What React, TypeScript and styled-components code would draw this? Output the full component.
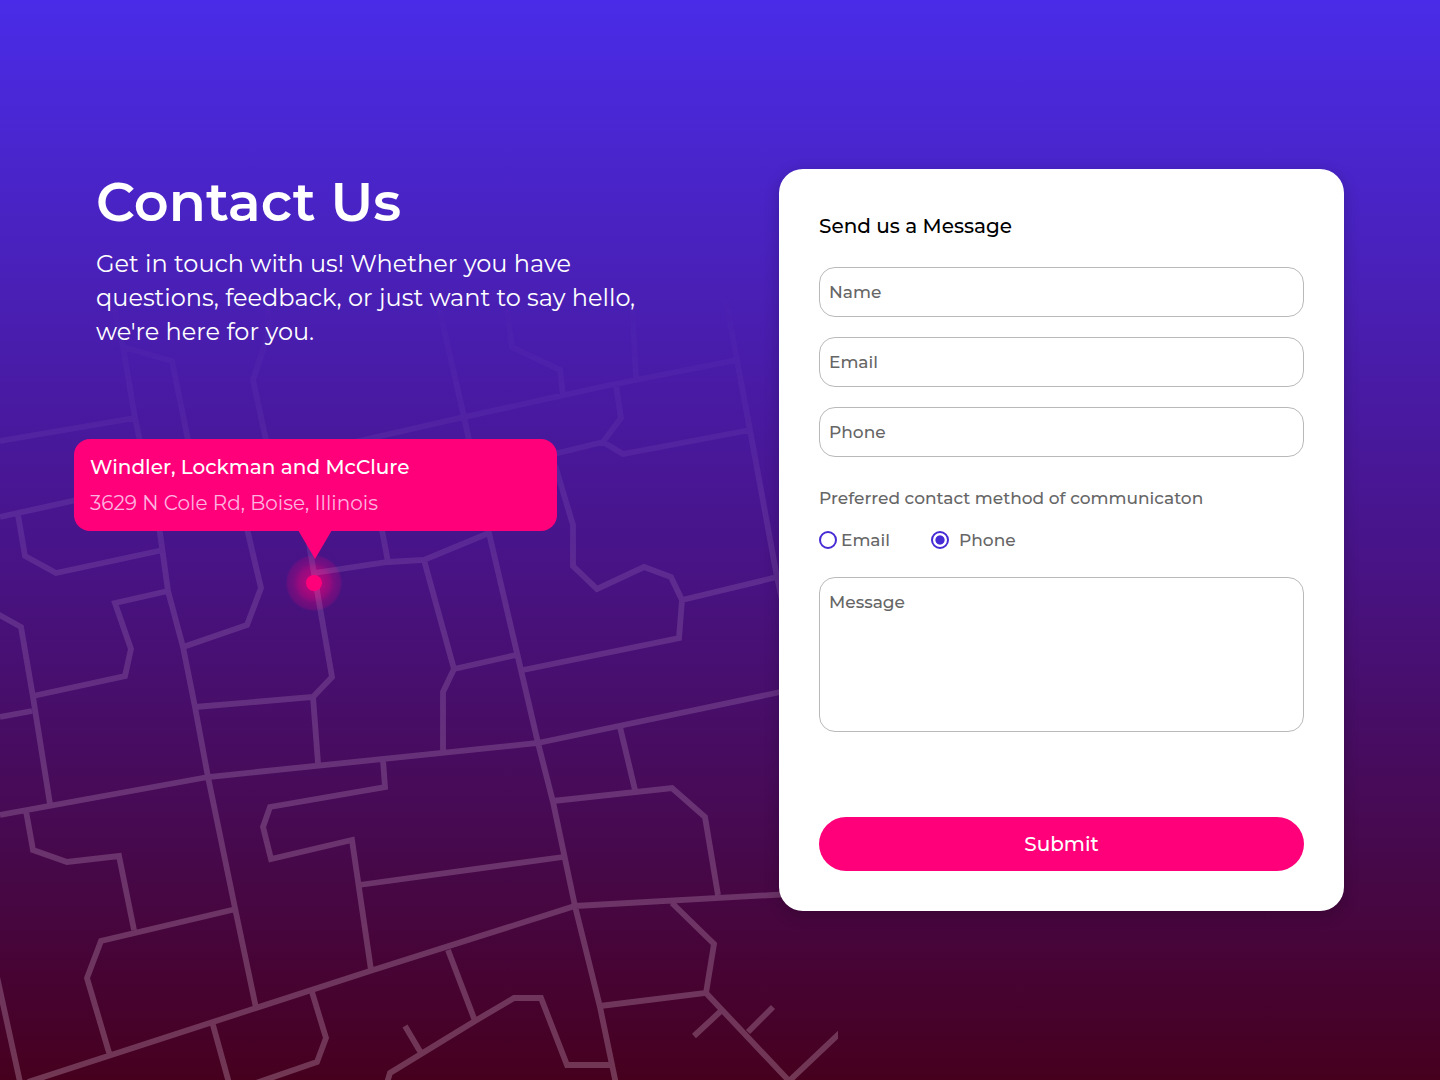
import React, { useState } from "react";
import styled, { createGlobalStyle } from "styled-components";

const GlobalStyle = createGlobalStyle`
  * { box-sizing: border-box; }
  body {
    margin: 0;
    font-family: Montserrat, Inter, "Open Sans", sans-serif;
  }
`;

const pink = "#ff007a";
const violet = "#452cd4";

const Page = styled.main`
  position: relative;
  display: grid;
  grid-template-columns: 1fr 565px;
  align-items: start;
  width: 1440px;
  height: 1080px;
  padding: 169px 96px 0;
  overflow: hidden;
  background: linear-gradient(180deg, #4a2ce8 0%, #48148a 50%, #46001e 100%);
`;

const MapLayer = styled.svg`
  position: absolute;
  left: 0;
  top: 0;
  width: 838px;
  height: 1080px;
  fill: none;
  stroke: #ffe6fa;
  stroke-width: 5.8;
  stroke-linejoin: miter;
  mask-image: linear-gradient(
    180deg,
    transparent 26%,
    rgba(0, 0, 0, 0.045) 38%,
    rgba(0, 0, 0, 0.12) 54%,
    rgba(0, 0, 0, 0.19) 75%,
    rgba(0, 0, 0, 0.24) 100%
  );
`;

const Intro = styled.section`
  position: relative;
  display: flex;
  flex-direction: column;
  color: #fff;
`;

const Heading = styled.h1`
  margin: 0;
  padding-top: 1px;
  font-size: 54.2px;
  font-weight: 600;
  line-height: 65px;
`;

const Lead = styled.p`
  margin: 12px 0 0;
  font-size: 24px;
  font-weight: 400;
  line-height: 34px;
`;

const LeadLine = styled.span`
  display: block;
  white-space: nowrap;
`;

const Callout = styled.address`
  position: relative;
  display: flex;
  flex-direction: column;
  width: 483px;
  height: 92px;
  margin: 90px 0 0 -22px;
  padding: 10px 16px;
  border-radius: 16px;
  background: ${pink};
  font-style: normal;

  &::after {
    content: "";
    position: absolute;
    left: 224px;
    top: 91px;
    width: 34px;
    height: 29px;
    background: ${pink};
    clip-path: polygon(0 0, 100% 0, 50% 100%);
  }
`;

const Company = styled.strong`
  font-size: 20px;
  font-weight: 500;
  line-height: 36px;
`;

const Street = styled.span`
  font-size: 20px;
  font-weight: 400;
  line-height: 36px;
  color: #ffb3e0;
`;

const PinGlow = styled.div`
  position: absolute;
  left: 286px;
  top: 555px;
  width: 56px;
  height: 56px;
  border-radius: 50%;
  background: radial-gradient(
    circle closest-side,
    rgba(255, 0, 122, 0.55) 8px,
    rgba(255, 0, 122, 0.4) 16px,
    rgba(255, 0, 122, 0.26) 20px,
    rgba(255, 0, 122, 0.16) 26px,
    rgba(255, 0, 122, 0.06) 28px
  );
`;

const PinDot = styled.div`
  position: absolute;
  left: 306px;
  top: 575px;
  width: 16px;
  height: 16px;
  border-radius: 50%;
  background: ${pink};
`;

const Card = styled.form`
  position: relative;
  display: flex;
  flex-direction: column;
  height: 742px;
  padding: 40px;
  border-radius: 24px;
  background: #fff;
  box-shadow: 0 4px 16px rgba(0, 0, 0, 0.2);
`;

const CardTitle = styled.h2`
  margin: 0 0 23px;
  font-size: 20px;
  font-weight: 500;
  line-height: 35px;
  color: #000;
`;

const Fields = styled.div`
  display: flex;
  flex-direction: column;
  gap: 20px;
`;

const Field = styled.input`
  width: 100%;
  height: 50px;
  padding: 0 9px;
  border: 1px solid #b9b9b9;
  border-radius: 16px;
  outline: none;
  background: #fff;
  font: 500 17px Montserrat, Inter, sans-serif;
  color: #5c5c5c;
  &::placeholder { color: #666; opacity: 1; }
`;

const MessageBox = styled.textarea`
  display: block;
  width: 100%;
  height: 155px;
  margin-top: 23px;
  padding: 12px 9px;
  border: 1px solid #b9b9b9;
  border-radius: 16px;
  outline: none;
  resize: none;
  background: #fff;
  font: 500 17px/24px Montserrat, Inter, sans-serif;
  color: #5c5c5c;
  &::placeholder { color: #666; opacity: 1; }
`;

const MethodLabel = styled.p`
  margin: 29px 0 16px;
  font-size: 17px;
  font-weight: 500;
  line-height: 24px;
  color: #666;
`;

const Methods = styled.div`
  display: flex;
  align-items: center;
  height: 28px;
`;

const Method = styled.label<{ $gap: number; $width?: number }>`
  display: flex;
  align-items: center;
  gap: ${(p) => p.$gap}px;
  width: ${(p) => (p.$width ? `${p.$width}px` : "auto")};
  font-size: 17px;
  font-weight: 500;
  color: #666;
`;

const Radio = styled.input`
  appearance: none;
  width: 18px;
  height: 18px;
  margin: 0;
  border: 2px solid ${violet};
  border-radius: 50%;
  background: #fff;
  &:checked {
    background: radial-gradient(circle, ${violet} 0 4.2px, #fff 5px);
  }
`;

const Submit = styled.button`
  height: 54px;
  margin-top: auto;
  border: 0;
  border-radius: 27px;
  background: ${pink};
  font: 500 20px Montserrat, Inter, sans-serif;
  color: #fff;
`;

const roads = [
  "M108 280L123 347L135 418L160 533L168 591L183 647L195 707L208 777L235 908L256 1008",
  "M123 347L172 361L188 440L205 520",
  "M268 290V335L253 380L266 440L290 520",
  "M0 441L135 418M0 517L90 497",
  "M18 515L25 556L56 573L163 550",
  "M168 591L115 603L131 649L125 676L33 696",
  "M-4 613L21 627L33 697L50 804M0 717L32 711",
  "M0 815L208 777L538 743L790 690",
  "M26 811L33 850L67 862L119 856L134 930",
  "M236 909L101 941L87 978L110 1056",
  "M-4 972L20 1082M28 1082L370 971L575 906L790 894",
  "M245 520L252 550L261 588L247 625L183 647",
  "M306 520L310 550L332 677L313 697L195 707M313 697L318 763",
  "M314 573L388 562L424 560L489 533M381 525L388 562",
  "M424 560L454 669L443 692V750M454 669L516 655",
  "M435 290L464 417L489 533L517 653L538 743L553 802L575 906L600 1007L616 1084",
  "M350 443L464 417L610 385L737 360",
  "M726 300L737 360L750 430L777 577L782 600",
  "M507 310L512 347L560 370L563 395M632 300L636 379",
  "M616 385L621 418L603 442L550 455M603 442L623 454L750 430",
  "M555 465L573 525V566L597 589L644 567L671 577L682 600L679 638L523 670M682 600L777 577",
  "M620 727L635 790M553 801L672 788L705 817L718 895",
  "M383 760L385 787L270 807L263 827L271 859L352 840L371 970M359 885L563 857",
  "M213 1025L229 1083M312 992L326 1038L317 1062L256 1083",
  "M405 1026L421 1053M386 1086L390 1073L475 1021L514 998H541L567 1065H612",
  "M448 950L475 1021",
  "M672 903L714 944L706 993L600 1006M706 993L791 1083",
  "M722 1010L694 1036M748 1032L773 1007M786 1084L845 1028",
];

const fieldNames = ["Name", "Email", "Phone"];

export default function App() {
  const [method, setMethod] = useState("phone");

  return (
    <>
      <GlobalStyle />
      <Page>
        <PinGlow />
        <MapLayer viewBox="0 0 838 1080" aria-hidden="true">
          <path d={roads.join("")} />
        </MapLayer>
        <PinDot />
        <Intro>
          <Heading>Contact Us</Heading>
          <Lead>
            <LeadLine>Get in touch with us! Whether you have</LeadLine>
            <LeadLine>questions, feedback, or just want to say hello,</LeadLine>
            <LeadLine>we're here for you.</LeadLine>
          </Lead>
          <Callout>
            <Company>Windler, Lockman and McClure</Company>
            <Street>3629 N Cole Rd, Boise, Illinois</Street>
          </Callout>
        </Intro>
        <Card onSubmit={(e) => e.preventDefault()}>
          <CardTitle>Send us a Message</CardTitle>
          <Fields>
            {fieldNames.map((name) => (
              <Field key={name} placeholder={name} aria-label={name} />
            ))}
          </Fields>
          <MethodLabel>Preferred contact method of communicaton</MethodLabel>
          <Methods>
            <Method $gap={4} $width={112}>
              <Radio
                type="radio"
                name="method"
                checked={method === "email"}
                onChange={() => setMethod("email")}
              />
              Email
            </Method>
            <Method $gap={10}>
              <Radio
                type="radio"
                name="method"
                checked={method === "phone"}
                onChange={() => setMethod("phone")}
              />
              Phone
            </Method>
          </Methods>
          <MessageBox placeholder="Message" aria-label="Message" />
          <Submit type="submit">Submit</Submit>
        </Card>
      </Page>
    </>
  );
}
